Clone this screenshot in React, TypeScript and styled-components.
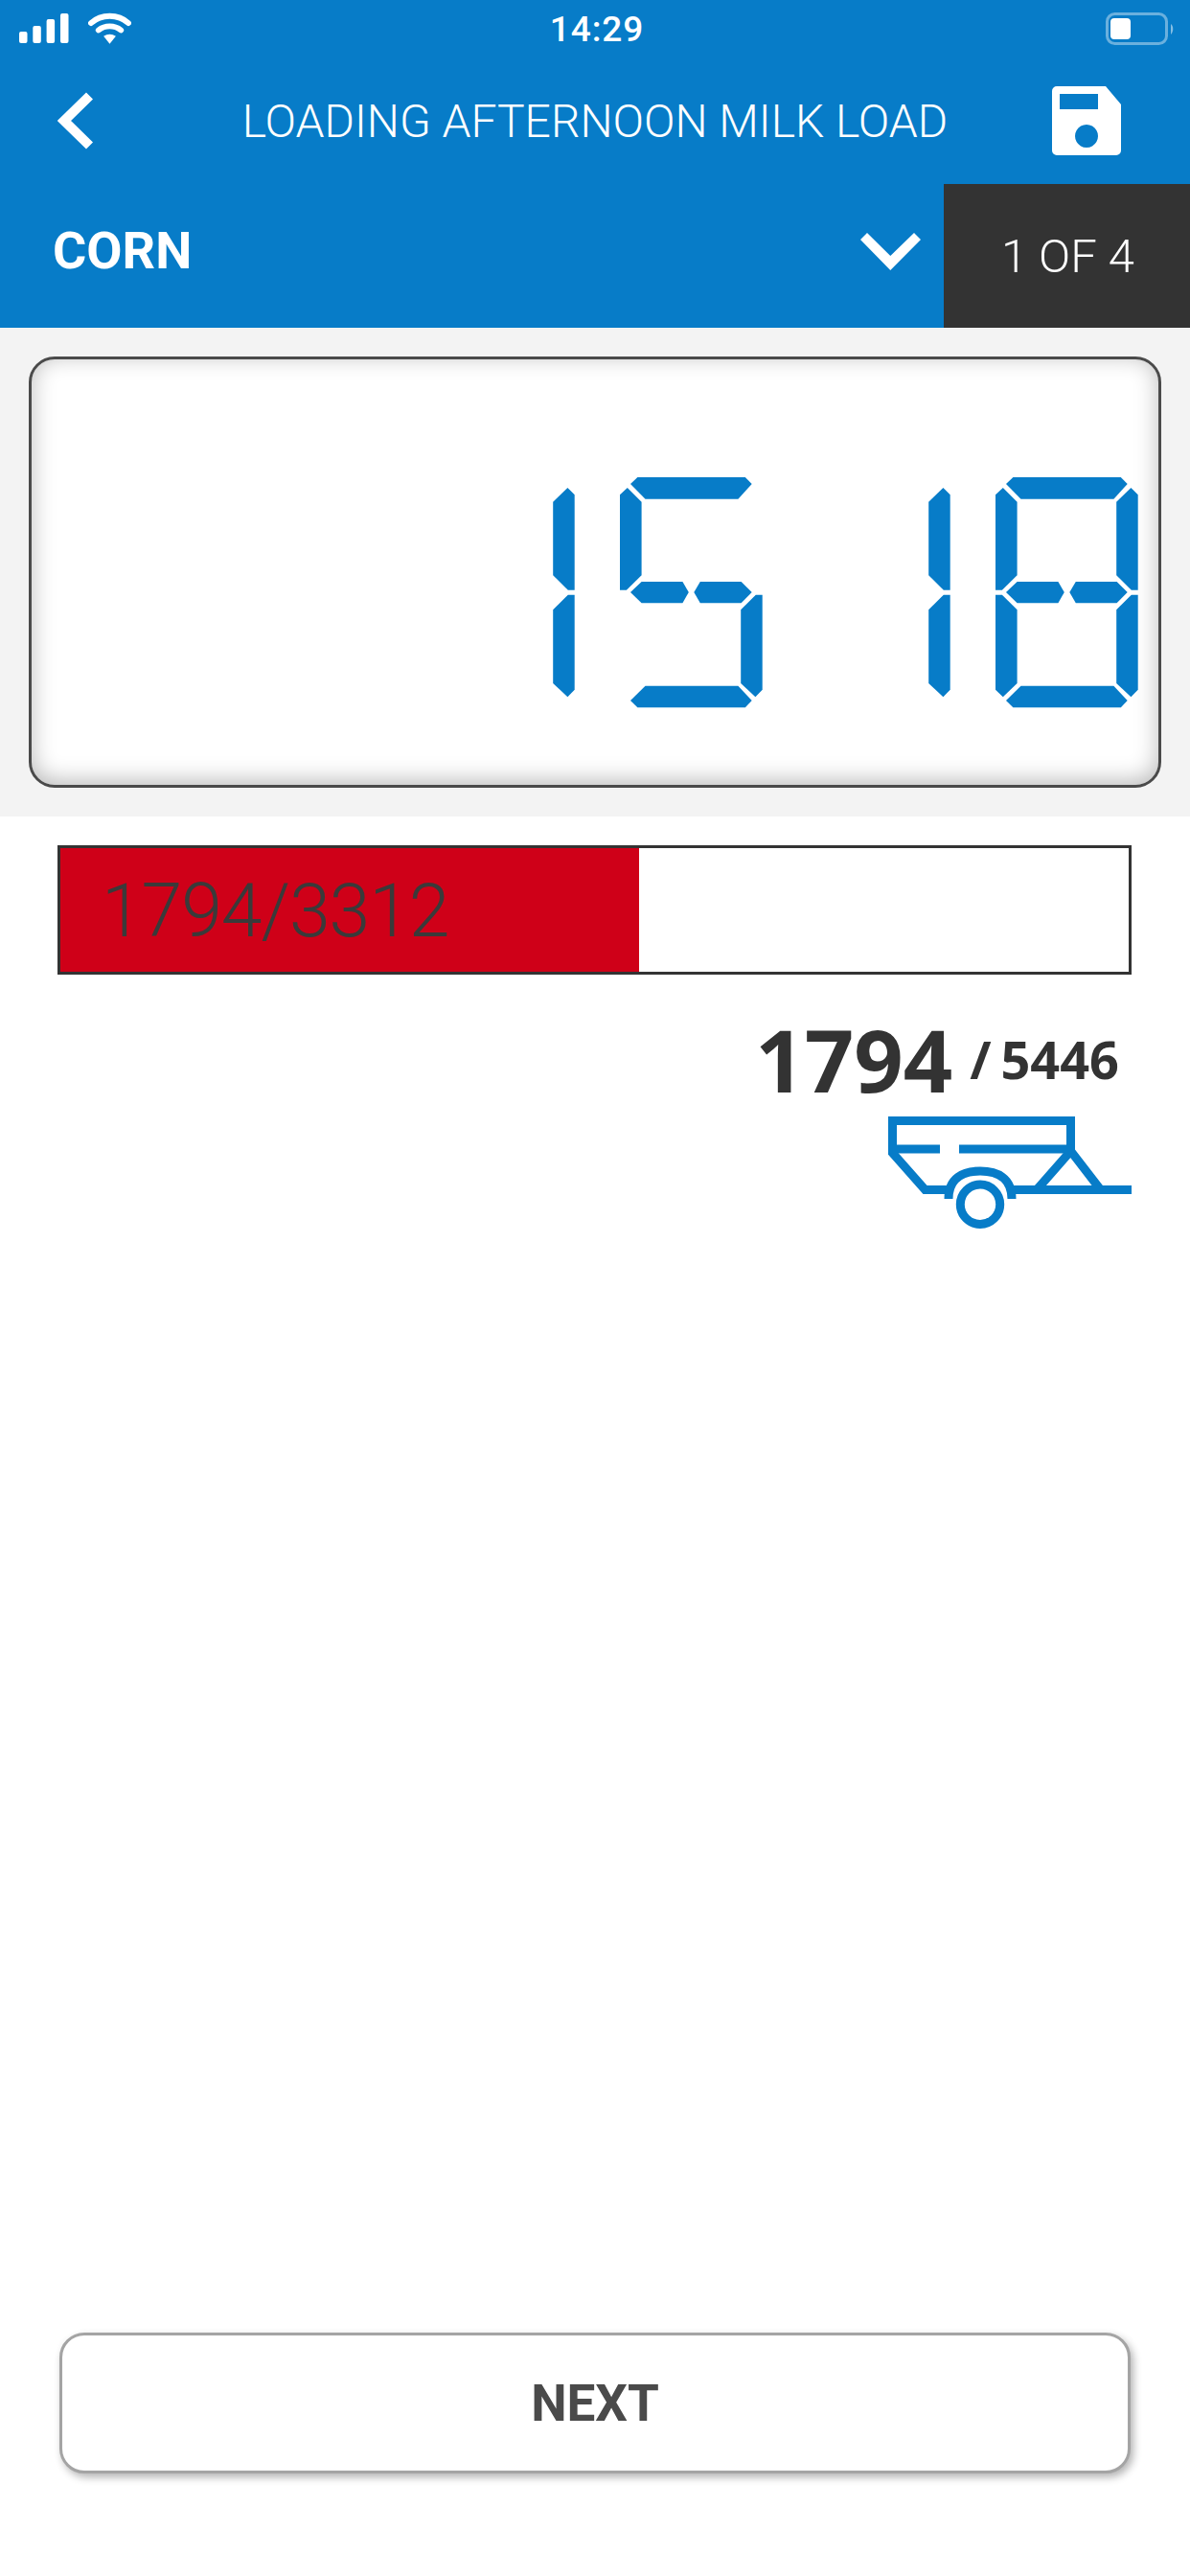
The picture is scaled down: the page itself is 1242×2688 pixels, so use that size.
import React from "react";
import styled, { createGlobalStyle } from "styled-components";

const Global = createGlobalStyle`
  html, body { margin: 0; padding: 0; background: #fff; }
  * { box-sizing: border-box; }
`;
const Page = styled.div`
  width: 1242px; height: 2688px; display: flex; flex-direction: column; overflow: hidden;
  background: #fff; font-family: Roboto, "Liberation Sans", sans-serif;
`;
const Header = styled.header`background: #077cc8; color: #fff; display: flex; flex-direction: column;`;
const StatusBar = styled.div`
  height: 60px; display: grid; grid-template-columns: 1fr auto 1fr; align-items: start;
  padding: 13px 16px 0 20px;
`;
const StatusLeft = styled.div`display: flex; gap: 20px; align-items: flex-start;`;
const StatusRight = styled.div`display: flex; justify-content: flex-end;`;
const Time = styled.div`font-size: 37px; font-weight: 500; line-height: 36px; letter-spacing: 0.9px;`;
const TitleRow = styled.div`
  height: 132px; display: grid; grid-template-columns: 1fr auto 1fr; align-items: center; padding: 0 60px;
`;
const Title = styled.h1`margin: 2px 0 0; font-size: 48px; font-weight: 300; line-height: 1; white-space: nowrap;`;
const SaveSlot = styled.div`display: flex; justify-content: flex-end; padding-right: 12px;`;
const SelectorRow = styled.div`height: 150px; display: flex; align-items: stretch;`;
const Selector = styled.div`
  flex: 1; display: flex; align-items: center; justify-content: space-between; padding: 0 24px 9px 55px;
`;
const Crop = styled.span`font-size: 54px; font-weight: 700; line-height: 1; margin-bottom: 2px;`;
const Counter = styled.div`
  width: 257px; background: #333; display: flex; align-items: center; justify-content: center;
  font-size: 49px; font-weight: 300; padding-left: 2px;
`;
const DisplaySection = styled.section`background: #f3f3f3; padding: 30px;`;
const Display = styled.div`
  height: 450px; border: 3px solid #4a4a4a; border-radius: 27px; background: #fff;
  box-shadow: inset 0 -4px 24px rgba(0,0,0,.28);
  display: flex; justify-content: flex-end; align-items: flex-start; padding: 123px 21px 0 0;
`;
const Main = styled.main`flex: 1; display: flex; flex-direction: column;`;
const Progress = styled.div`
  margin: 30px 61px 0 60px; height: 135px; border: 3px solid #333; display: flex; background: #fff;
`;
const Fill = styled.div`
  background: #cf0018; display: flex; align-items: center; padding: 3px 0 0 43px; white-space: nowrap;
  font-size: 77px; font-weight: 300; color: #3a3a3a; line-height: 1; letter-spacing: -1.1px;
`;
const Count = styled.div`
  display: flex; justify-content: flex-end; align-items: center; gap: 18px; padding-right: 74px; margin-top: 42px;
  font-family: "Open Sans", sans-serif; font-weight: 700; color: #333;
`;
const Big = styled.span`font-size: 90px; line-height: 92px;`;
const Small = styled.span`font-size: 54px; line-height: 60px; word-spacing: -4px;`;
const TrailerRow = styled.div`display: flex; justify-content: flex-end; padding-right: 61px; margin-top: 14px;`;
const Footer = styled.div`margin-top: auto; padding: 0 62px 107px 62px;`;
const NextButton = styled.button`
  width: 100%; height: 147px; background: #fff; border: 3px solid #a4a4a4; border-radius: 26px;
  box-shadow: 3px 4px 8px rgba(0,0,0,.3); font-family: Roboto, sans-serif; font-size: 53px; font-weight: 700;
  color: #4a4a4a; padding: 0;
`;

const SEGS: Record<string, string> = {
  a: "11,7 18.4,0 130.8,0 137.7,7 123.4,22.7 26.5,22.7",
  f: "0,18.3 7.8,11 22.6,25.7 22.6,102.3 6.9,117.7 0,117.7",
  e: "0,122.7 6.9,122.7 22.6,138.3 22.6,215 7.8,229.3 0,221.7",
  b: "148.7,18.3 141.4,11 126.2,25.7 126.2,102.3 141.8,117.7 148.7,117.7",
  c: "148.7,122.7 141.8,122.7 126.2,138.3 126.2,215 141.4,229.3 148.7,221.7",
  g: "11,120 22.6,109 65.4,109 71.8,120 65.4,131.3 22.6,131.3",
  h: "77.3,120 83.8,109 126.6,109 137.7,120 126.6,131.3 83.8,131.3",
  d: "11,233 26.5,217.7 123.4,217.7 137.7,233 130.8,240.3 18.4,240.3",
};
const DIGITS: Record<string, string> = { "1": "bc", "5": "afghcd", "8": "abcdefgh" };

const Digits = ({ value }: { value: string }) => (
  <svg width={737} height={241} viewBox="0 0 737 241" role="img" aria-label={value}>
    {value.split("").map((ch, i) => (
      <g key={i} transform={`translate(${i * 196} 0)`} fill="#077cc8">
        {DIGITS[ch].split("").map((s) => <polygon key={s} points={SEGS[s]} />)}
      </g>
    ))}
  </svg>
);

const Signal = () => (
  <svg width={52} height={33} viewBox="0 0 52 33" fill="#fff">
    <rect x="0" y="20" width="8.5" height="12" rx="2" />
    <rect x="14.3" y="14" width="8.5" height="18" rx="2" />
    <rect x="28.6" y="7" width="8.5" height="25" rx="2" />
    <rect x="43" y="1" width="8.5" height="31" rx="2" />
  </svg>
);
const Wifi = () => (
  <svg width={45} height={34} viewBox="0 0 46 34">
    <path d="M3 11 C14 1 32 1 43 11" fill="none" stroke="#fff" strokeWidth="6" strokeLinecap="round" />
    <path d="M11 18.5 C18 13 28 13 35 18.5" fill="none" stroke="#fff" strokeWidth="6" strokeLinecap="round" />
    <path d="M16.5 25 C20.5 22 25.5 22 29.5 25 L23 33 Z" fill="#fff" />
  </svg>
);
const Battery = () => (
  <svg width={72} height={34} viewBox="0 0 72 34">
    <rect x="1.5" y="1.5" width="62" height="31" rx="8" fill="none" stroke="#fff" strokeOpacity=".4" strokeWidth="3" />
    <rect x="5" y="6" width="21" height="22" rx="4" fill="#fff" />
    <path d="M68 12 C71 14 71 20 68 23 Z" fill="#fff" fillOpacity=".5" />
  </svg>
);
const Back = () => (
  <svg width={38} height={60} viewBox="0 0 38 60">
    <path d="M33.5 4 L7 30 L33.5 56" fill="none" stroke="#fff" strokeWidth="10" />
  </svg>
);
const Save = () => (
  <svg width={72} height={72} viewBox="0 0 72 72">
    <path fillRule="evenodd" fill="#fff" d="M5 0 H56 L72 19 V67 a5 5 0 0 1 -5 5 H5 a5 5 0 0 1 -5 -5 V5 a5 5 0 0 1 5 -5 Z M8 8 V24 H48 V8 Z M36 40 a12 12 0 1 0 0.01 0 Z" />
  </svg>
);
const Chevron = () => (
  <svg width={63} height={39} viewBox="0 0 63 39">
    <polygon points="0,7 7,0 31.3,24 56,0 63,7 31.3,39" fill="#fff" />
  </svg>
);
const Trailer = () => (
  <svg width={254} height={117} viewBox="0 0 254 117" fill="none" stroke="#077cc8" strokeWidth="9">
    <path d="M190.5 38 V4.5 H4.5 V38 L38.5 76.5 H62" />
    <path d="M4.5 34 H54 M74 34 H190.5" />
    <path d="M155 76.5 L190.5 36 L221.7 76.5" />
    <path d="M131 76.5 H254" />
    <path d="M63 86 C63 64 78 57 96 57 C114 57 129 64 129 86" />
    <circle cx="96" cy="91.7" r="20.7" />
  </svg>
);

const LOADED = 1794;
const TARGET = 3312;

export default function App() {
  return (
    <Page>
      <Global />
      <Header>
        <StatusBar>
          <StatusLeft><Signal /><Wifi /></StatusLeft>
          <Time>14:29</Time>
          <StatusRight><Battery /></StatusRight>
        </StatusBar>
        <TitleRow>
          <Back />
          <Title>LOADING AFTERNOON MILK LOAD</Title>
          <SaveSlot><Save /></SaveSlot>
        </TitleRow>
        <SelectorRow>
          <Selector><Crop>CORN</Crop><Chevron /></Selector>
          <Counter>1 OF 4</Counter>
        </SelectorRow>
      </Header>
      <DisplaySection>
        <Display><Digits value="1518" /></Display>
      </DisplaySection>
      <Main>
        <Progress>
          <Fill style={{ width: `${(LOADED / TARGET) * 100}%` }}>{LOADED}/{TARGET}</Fill>
        </Progress>
        <Count><Big>{LOADED}</Big><Small>/ 5446</Small></Count>
        <TrailerRow><Trailer /></TrailerRow>
        <Footer><NextButton>NEXT</NextButton></Footer>
      </Main>
    </Page>
  );
}
